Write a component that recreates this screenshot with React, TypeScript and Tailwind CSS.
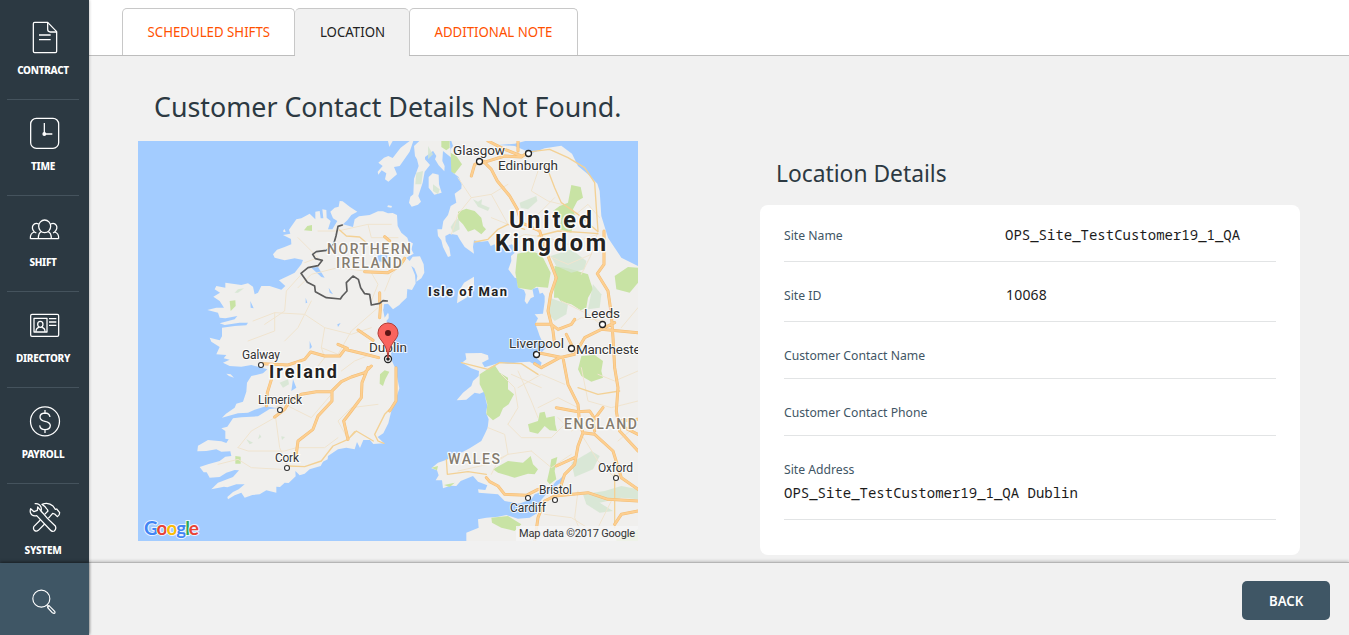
import React from "react";

const ICONS: Record<string, React.ReactNode> = {
  CONTRACT: (
    <>
      <path d="M23 7H62L89 35V94Q89 98 85 98H23Q19 98 19 94V11Q19 7 23 7Z" />
      <path d="M62 7V28Q62 36 70 36H89M36 45H71M36 59H71" />
    </>
  ),
  TIME: (
    <>
      <rect x="11" y="7" width="84" height="90" rx="17" />
      <path d="M52 21V54H76" />
      <circle cx="52" cy="54" r="4" fill="white" />
    </>
  ),
  SHIFT: (
    <>
      <ellipse cx="53" cy="43" rx="18" ry="19" />
      <path d="M34 80Q34 62 43 59M63 59Q73 62 73 80M10 80H95M10 80Q9 64 22 60Q13 50 18 40Q24 31 35 36M95 80Q96 64 83 60Q93 50 88 40Q82 31 71 36M22 60L28 63M83 60L78 63" />
    </>
  ),
  DIRECTORY: (
    <>
      <rect x="11" y="19" width="84" height="66" rx="4" />
      <rect x="21" y="31" width="39" height="41" />
      <ellipse cx="40" cy="49" rx="8" ry="9" />
      <path d="M27 71Q27 60 36 58M44 58Q54 60 54 71" />
      <path d="M66 32H88M66 42H88M66 52H88" />
    </>
  ),
  PAYROLL: (
    <>
      <circle cx="54" cy="52" r="43.5" />
      <path d="M54 18V27M54 77V87M69 39Q67 27 54 27Q39 28 39 39Q39 49 54 52Q70 55 70 65Q69 77 54 77Q40 77 38 64" />
    </>
  ),
  SYSTEM: (
    <>
      <path d="M23 11Q37 9 42 21Q44 28 42 34L52 44M62 56L85 78Q89 87 82 93Q75 96 70 90L29 47Q14 50 10 37Q9 30 11 26L21 35L31 31L32 21Z" />
      <path d="M40 60L21 79Q17 87 23 92Q29 95 34 91L53 72M53 43L63 33Q58 20 45 13Q64 5 78 18L85 28L89 27L98 38Q98 46 91 50L83 42L77 40L64 55" />
    </>
  ),
};

const NAV = ["CONTRACT", "TIME", "SHIFT", "DIRECTORY", "PAYROLL", "SYSTEM"];

function Sidebar() {
  return (
    <aside className="relative z-10 flex h-full w-[89px] shrink-0 flex-col bg-[#2c3942] shadow-[0_0_3px_rgba(0,0,0,0.3)]">
      <nav className="flex h-[563px] flex-col overflow-hidden pt-1">
        {NAV.map((name) => (
          <div
            key={name}
            className="mr-[10px] ml-[7px] flex h-24 shrink-0 flex-col items-center border-b border-[#45535d] pt-4"
          >
            <svg
              viewBox="0 0 108 108"
              className="ml-1 size-9 shrink-0"
              fill="none"
              stroke="white"
              strokeWidth="3.8"
              strokeLinejoin="round"
            >
              {ICONS[name]}
            </svg>
            <span className="mt-[7px] text-[10px] leading-[14px] font-extrabold tracking-[-0.3px] text-white">
              {name}
            </span>
          </div>
        ))}
      </nav>
      <div className="flex h-[72px] items-center justify-center bg-[#3f5665] pt-[6px] pr-[2px] shadow-[0_-1px_3px_rgba(0,0,0,0.5)]">
        <svg viewBox="0 0 72 78" className="h-[26px] w-6" fill="none" stroke="white" strokeWidth="3.4">
          <circle cx="28" cy="29" r="25.5" />
          <path d="M44 49L50 55M51 50L68 67Q71 73 66 73L61 71L47 56Q46 50 51 50Z" />
        </svg>
      </div>
    </aside>
  );
}

type LabelProps = { x: number; y: number; size: number; width: number; children: string };

function City({ x, y, size, width, children }: LabelProps) {
  return (
    <text
      x={x}
      y={y}
      fontSize={size}
      textLength={width}
      fill="#333"
      stroke="#fff"
      strokeWidth="2"
      strokeOpacity="0.8"
      paintOrder="stroke"
      className="font-['Roboto',sans-serif]"
    >
      {children}
    </text>
  );
}

function Region({ x, y, size, width, children, dark }: LabelProps & { dark?: boolean }) {
  return (
    <text
      x={x}
      y={y}
      fontSize={size}
      textLength={width}
      fill={dark ? "#222" : "#857d70"}
      stroke="#fff"
      strokeWidth={dark ? 3 : 2.5}
      strokeOpacity="0.85"
      strokeLinejoin="round"
      paintOrder="stroke"
      fontWeight={dark ? 700 : 500}
      className="font-['Roboto',sans-serif]"
    >
      {children}
    </text>
  );
}

const IRELAND =
  "M605 180L614 181 635 197 658 212 640 222 628 238 615 250 645 258 650 235 663 226 695 222 720 211 735 211 750 217 764 216 777 222 779 255 790 275 808 290 813 305 825 307 820 325 827 338 805 350 815 360 824 347 846 346 857 370 859 395 850 412 835 422 838 405 829 382 820 375 831 402 833 427 822 447 808 444 806 470 790 485 784 492 765 505 750 488 738 490 736 507 752 518 752 532 745 540 756 557 764 587 766 617 759 637 763 662 774 687 778 712 784 742 775 770 766 787 757 822 751 847 736 877 719 888 738 907 706 909 696 897 676 897 666 921 657 903 650 925 625 920 600 925 570 945 569 955 555 962 548 975 515 985 500 998 485 1003 472 990 473 1006 452 1026 440 1025 426 1038 415 1037 415 1055 385 1048 365 1060 343 1062 320 1070 310 1055 290 1063 270 1075 268 1068 285 1053 302 1045 320 1030 295 1030 268 1039 258 1037 220 1045 240 1025 285 1008 303 988 290 987 265 995 245 1008 215 1010 206 994 197 994 185 978 210 970 245 960 262 947 280 945 277 931 250 932 235 925 205 930 178 931 180 914 210 897 250 901 265 906 272 895 262 893 262 870 250 862 268 857 285 832 310 829 360 826 395 804 420 802 383 796 350 806 330 815 300 817 252 830 264 818 290 800 295 788 315 782 325 752 327 725 340 705 375 697 388 685 372 680 340 672 310 677 275 675 255 665 275 656 257 652 265 642 235 640 245 618 220 602 215 590 245 598 252 586 252 560 290 555 325 553 330 545 305 545 260 552 245 547 290 535 298 525 262 532 245 530 240 515 208 507 235 500 258 500 245 480 226 467 246 455 230 445 235 435 262 440 262 425 310 432 330 427 345 437 350 460 360 455 370 435 395 435 430 446 442 435 423 418 450 405 470 395 490 370 495 357 470 352 440 358 410 350 405 340 417 326 440 318 460 310 459 294 435 282 457 278 453 266 475 235 490 232 515 218 532 235 532 212 545 210 548 232 556 232 553 205 565 207 566 230 578 240 570 265 583 265 598 240 585 232 577 212 590 200 602 197Z";

const BRITAIN =
  "M940 0L945 15 938 25 940 60 945 95 962 108 971 128 970 143 950 158 955 185 938 195 930 222 916 240 912 265 898 265 900 285 910 298 915 318 930 348 938 345 934 320 923 300 922 285 935 278 958 282 965 295 980 318 1008 338 1005 318 1008 298 1030 302 1050 300 1058 315 1070 310 1075 324 1122 310 1131 320 1130 335 1119 345 1120 360 1111 385 1130 410 1137 412 1140 440 1158 447 1163 460 1160 480 1167 490 1178 472 1188 467 1183 443 1200 440 1205 458 1214 455 1220 465 1220 482 1215 518 1190 520 1200 532 1192 548 1200 570 1205 585 1212 600 1224 620 1205 640 1190 628 1195 650 1211 665 1205 680 1192 672 1175 662 1145 664 1110 668 1085 665 1040 679 1032 665 1052 655 1050 643 1030 636 982 637 985 655 972 665 1000 682 1023 690 1022 705 1005 720 1000 735 975 755 956 778 985 776 1010 755 1025 758 1042 751 1043 775 1048 795 1044 815 1052 835 1049 860 1040 880 1030 900 995 922 970 935 948 941 930 955 900 965 880 982 897 988 902 1003 893 1018 912 1018 915 1042 937 1034 955 1035 968 1020 1005 1005 1020 1022 1048 1033 1042 1047 1020 1045 1022 1055 1080 1060 1100 1080 1143 1088 1180 1075 1190 1060 1218 1050 1242 1036 1255 1020 1265 1015 1278 1002 1268 1025 1237 1048 1222 1063 1210 1076 1202 1095 1197 1117 1175 1130 1140 1133 1105 1122 1080 1127 1045 1130 1020 1135 1022 1160 985 1175 985 1200H1500V375L1450 350 1430 320 1410 290 1390 225 1385 150 1378 128 1350 100 1320 75 1302 38 1270 14 1220 22 1185 35 1160 28 1130 15 1080 12 1130 8 1162 0Z";

const ISLANDS = [
  "M721 65L738 50 751 45 764 51 788 20 815 0H826L815 32 785 75 768 78 777 100 751 122 741 115 745 97 731 88 721 101 719 92 734 75Z",
  "M750 0H764L754 18Z",
  "M844 0H900L885 30 861 48 861 55 876 72 860 92 854 125 841 165 849 182 840 191 821 197 813 185 817 167 826 160 828 113 842 75 837 55 831 45 828 15Z",
  "M884 97L902 101 903 130 911 155 889 161 872 140 872 108Z",
  "M885 0H935L940 50 915 30 913 60 920 75 919 91 902 73 891 55 895 45 880 22Z",
  "M1008 407V445L985 470 957 487 960 455 978 425Z",
  "M750 193L762 195 760 200 748 198Z",
  "M436 268L440 264 443 273 436 273ZM265 698L278 700 288 710 273 705Z",
];

const PARKS_BRIGHT = [
  "M960 212L985 203 1010 210 1030 230 1035 255 1044 265 1030 280 1010 265 990 272 975 250 960 235Z",
  "M1138 338L1175 330 1210 340 1225 370 1238 395 1230 440 1195 437 1180 447 1140 440 1132 395 1135 365Z",
  "M1250 375L1290 382 1350 400 1358 425 1365 445 1350 470 1345 500 1328 508 1300 490 1270 482 1260 470 1248 470Z",
  "M1300 132L1328 138 1335 170 1318 180 1305 205 1310 220 1300 275 1265 265 1270 235 1245 210 1265 195 1290 185Z",
  "M1430 405L1470 378 1500 380V425L1475 455 1435 445Z",
  "M1025 700L1055 680 1070 672 1085 695 1110 710 1110 745 1128 760 1112 790 1095 802 1085 825 1065 838 1045 820 1048 790 1040 760 1025 730Z",
  "M1330 645L1370 642 1395 660 1390 690 1395 710 1360 722 1330 705 1320 685 1325 665Z",
  "M1170 850L1200 840 1205 815 1220 812 1225 830 1250 825 1252 850 1257 870 1235 868 1220 855 1200 878 1175 872Z",
  "M1065 985L1110 960 1155 965 1178 945 1185 970 1200 985 1190 1000 1170 998 1130 1010 1080 995Z",
  "M1060 1130L1110 1125 1150 1150 1130 1170 1090 1160 1062 1145Z",
  "M1240 955L1258 948 1250 990 1255 1015 1235 1030 1227 1020 1235 985Z",
  "M938 35L955 45 972 70 950 98 940 92Z",
  "M910 0H935V20L925 28 910 18Z",
  "M498 268L508 255 522 252 522 270Z",
  "M275 480L292 478 293 495 278 510Z",
  "M726 700L740 688 754 692 742 715 735 735 725 728Z",
  "M292 945L308 947 308 968 292 968Z",
  "M880 980L900 975 897 988ZM918 1032L950 1025 935 1038ZM1435 1195L1500 1165V1200H1435Z",
];

const PARKS_PALE = [
  "M1145 185L1195 165 1198 180 1170 205 1148 200Z",
  "M950 240L962 232 965 265 945 275 938 258Z",
  "M1005 175L1020 182 1032 175 1030 190 1055 200 1050 210 1020 197Z",
  "M1238 345L1300 325 1345 360 1340 385 1300 395 1255 375Z",
  "M1235 470L1290 490 1285 520 1250 540 1228 515Z",
  "M1365 430L1390 460 1385 500 1350 505Z",
  "M1300 965L1360 930 1385 945 1365 985 1310 1008Z",
  "M1335 1060L1400 1050 1450 1035 1500 1045V1075L1450 1070 1385 1085 1425 1110 1385 1115 1345 1090Z",
  "M425 725L450 715 453 730 435 740Z",
  "M290 455L300 445 318 442 300 455Z",
  "M325 895L345 905 335 910ZM430 886L441 888 432 897ZM365 880L370 888 360 895Z",
  "M835 95L855 90 850 130 832 130ZM870 15L885 40 870 55ZM885 130L905 145 900 160 885 150Z",
];

const MINOR_ROADS =
  "M480 440L520 400 600 380 680 390M380 550L440 510 445 450 490 400M345 540L410 515 500 520 560 560 640 580 700 560M330 600L410 570 410 515M440 600L480 560 500 520 520 480M560 560L550 620 600 640M600 640L640 570 720 500M520 700L560 650 550 620M410 800L440 790 520 830 580 760M413 830L425 920 450 980M300 920L340 870 410 830M300 920L330 930 440 930 475 920M240 970L300 955 340 980 430 985M475 920L560 920 600 890M630 895L600 840 640 800 720 790M610 690L650 660 700 640M540 270L600 270 690 250 760 250M480 290L540 350 500 365M690 250L700 290 780 290M740 450L760 400 800 360M700 480L720 430 700 395M960 110L1000 170 960 220 940 280M1000 170L1060 160 1110 130M1060 230L1110 250 1060 160M1200 90L1180 150 1230 180 1270 190M1180 260L1200 220 1250 170M1120 300L1160 280 1230 290M1380 270L1360 340 1330 400M1220 340L1290 370 1360 340M1270 480L1350 520 1400 560M1260 570L1330 530 1400 540M1090 700L1130 740 1140 800 1110 850M1140 740L1210 700 1280 730M1110 850L1150 890 1240 890 1300 830M1050 860L1100 880 1110 940 1180 930M1110 940L1080 960 1060 1000M1180 930L1240 980 1300 940M1200 800L1260 770 1320 800M1330 680L1350 780 1420 800 1500 780M1380 700L1430 720 1500 690M1330 880L1380 960 1430 1010M1220 1120L1300 1130 1380 1180M1320 1050L1310 1130 1340 1200M1420 1080L1380 1160M1140 690L1180 780 1200 830M960 990L1050 970 1110 940M1120 700L1210 740M1290 240L1350 190 1385 230M1230 290L1290 310 1380 280M1450 560L1500 500M1290 860L1260 830M1440 900L1500 850M1380 820L1300 870M1460 640L1500 620";

const SECONDARY_ROADS =
  "M605 267L625 285 665 288 685 305M1010 303L1050 295 1080 265 1110 250 1160 265M1180 32L1235 25 1290 50 1340 80 1370 125 1375 200 1380 270M1225 75L1250 140 1270 185 1320 220 1380 272M1200 285L1260 270 1340 275 1380 278M738 907L720 900 710 880 740 820 755 805M706 900L655 870 630 895 585 915 550 960 500 977 450 975M970 665L1050 685 1085 665 1150 668 1200 700M925 955L928 1000 990 992 1045 1000M1320 740L1380 760 1445 750M1430 1000L1430 1160M630 895L650 872";

const MOTORWAYS =
  "M375 668L450 672 500 655 518 633 560 645 605 645 620 625 670 637 722 650M600 610L628 622M385 795L388 755 402 710M410 828L440 805 455 780 490 760 535 752 580 752 610 722 640 708 680 695 700 675M582 752V780L540 825 525 865 480 900 474 945M690 680L672 725 670 770 640 810 617 840 630 895M774 680V780L755 810M728 490L725 530M660 567L705 598M740 287L755 300M680 392L750 395 785 375 800 352M725 455V482M1000 105L1010 70 1035 60 1060 85 1078 120 1115 165 1138 205 1150 245 1205 270 1230 345 1255 410 1238 460 1230 510 1245 570 1250 610M1035 65L1100 45 1150 48 1168 35M1050 0L1100 25 1150 45M1140 0V30M1398 270V370L1378 398 1410 450 1420 520 1425 590 1430 680 1440 740 1435 810 1445 870 1500 930M1195 550L1240 550 1260 565 1300 550 1310 535M1285 580L1300 610M1190 668L1210 680 1265 650 1310 640 1340 590 1390 565 1500 575M1200 635L1275 650 1290 730 1320 790 1325 850 1335 875M1255 800L1320 812 1355 810 1365 825M1395 800L1365 840 1370 870M1500 835L1440 840M1045 1010L1055 1022 1080 1035 1100 1060 1165 1063 1200 1045M1500 880L1460 860M1335 875L1320 915 1310 970 1280 1000 1260 1060 1220 1080 1200 1130 1190 1200M1255 975L1310 950M1335 875L1370 880 1425 930 1450 1010 1500 1045M1250 1065L1350 1055 1410 1075 1500 1080M1430 1150L1450 1120 1500 1110M1430 545L1390 565";

function MapPicture() {
  return (
    <svg viewBox="0 0 500 400" className="block h-[400px] w-[500px] bg-[#a3ccff]">
      <g transform="scale(0.33333)" strokeLinejoin="round" strokeLinecap="round">
        <g fill="#f0efed">
          <path d={IRELAND} />
          <path d={BRITAIN} />
          {ISLANDS.map((d) => (
            <path key={d} d={d} />
          ))}
        </g>
        <g fill="#c8e3a4">
          {PARKS_BRIGHT.map((d) => (
            <path key={d} d={d} />
          ))}
        </g>
        <g fill="#d3e5cf" fillOpacity="0.8">
          {PARKS_PALE.map((d) => (
            <path key={d} d={d} />
          ))}
        </g>
        <path
          d="M520 380L540 378 560 410 550 408ZM572 440L585 460 575 455ZM720 342H748V365L715 360ZM337 480L347 502 338 500ZM503 470L508 485 503 487ZM515 600L522 618 515 625ZM465 715L475 740 460 750ZM598 550L608 546 600 558ZM735 505L750 515 740 530Z"
          fill="#a3ccff"
        />
        <g fill="none">
          <path d={MINOR_ROADS} stroke="#f0e4cf" strokeWidth="3" />
          <path d={SECONDARY_ROADS} stroke="#f3d195" strokeWidth="4" />
          <path d={MOTORWAYS} stroke="#f2bd75" strokeWidth="9" />
          <path d={MOTORWAYS} stroke="#fdcf91" strokeWidth="6" />
          <path
            d="M613 252L600 256 594 285 587 310 565 328 535 332 524 340 532 353 553 358 540 374 510 380 489 397 508 424 530 435 532 452 565 470 607 474 613 465 627 450 625 425 645 405 661 415 668 440 680 458 695 460 700 492 725 487 735 479 748 480"
            stroke="#5c5c5c"
            strokeWidth="5"
          />
        </g>
      </g>

      <g fill="#fff" stroke="#222" strokeWidth="1.3">
        <circle cx="341.5" cy="20.5" r="3" />
        <circle cx="390.5" cy="12.5" r="3" />
        <circle cx="464.5" cy="183.5" r="3" />
        <circle cx="398.5" cy="213.5" r="3" />
        <circle cx="433.5" cy="207.5" r="3" />
        <circle cx="250" cy="218" r="3.5" />
      </g>
      <g fill="#fff" stroke="#333" strokeWidth="1.1">
        <circle cx="123" cy="224" r="2.5" />
        <circle cx="142" cy="269" r="2.5" />
        <circle cx="149" cy="327" r="2.5" />
        <circle cx="478" cy="337" r="2.5" />
        <circle cx="390" cy="357" r="2.5" />
        <circle cx="417" cy="359" r="2.5" />
      </g>
      <circle cx="250" cy="218" r="1.8" fill="#222" />

      <City x={315} y={14} size={13.5} width={52}>Glasgow</City>
      <City x={360} y={28.5} size={13.5} width={60}>Edinburgh</City>
      <City x={446} y={177} size={13.5} width={36}>Leeds</City>
      <City x={371} y={207} size={13.5} width={55}>Liverpool</City>
      <City x={438} y={213} size={13.5} width={69}>Manchester</City>
      <City x={104} y={218} size={12} width={38}>Galway</City>
      <City x={120} y={263} size={12} width={44}>Limerick</City>
      <City x={137} y={321} size={12} width={24}>Cork</City>
      <City x={231} y={211} size={13.5} width={38}>Dublin</City>
      <City x={460} y={331} size={12} width={35}>Oxford</City>
      <City x={401} y={353} size={12} width={33}>Bristol</City>
      <City x={372} y={371} size={12} width={36}>Cardiff</City>

      <Region x={189} y={113} size={14} width={84}>NORTHERN</Region>
      <Region x={198} y={127} size={14} width={66}>IRELAND</Region>
      <Region x={426} y={288} size={14} width={73}>ENGLAND</Region>
      <Region x={310} y={323} size={14} width={52}>WALES</Region>
      <Region x={371} y={86.5} size={23.5} width={83} dark>United</Region>
      <Region x={357} y={109.5} size={23.5} width={111} dark>Kingdom</Region>
      <Region x={131} y={237} size={18} width={68} dark>Ireland</Region>
      <Region x={290} y={154.5} size={13} width={79} dark>Isle of Man</Region>

      <path
        d="M250 217C249.5 209 247 204 243 199C240.5 196 240 193.5 240 192A10 10 0 0 1 260 192C260 193.5 259.5 196 257 199C253 204 250.5 209 250 217Z"
        fill="#f9645e"
        stroke="#b13c35"
        strokeWidth="1"
      />
      <circle cx="250" cy="192" r="3" fill="#5c1515" />

      <text
        x="6"
        y="394"
        fontSize="19"
        textLength="55"
        strokeWidth="2"
        stroke="#fff"
        strokeOpacity="0.8"
        paintOrder="stroke"
        fontWeight="700"
        className="font-['Lato',sans-serif]"
      >
        <tspan fill="#4285f4">G</tspan>
        <tspan fill="#ea4335">o</tspan>
        <tspan fill="#fbbc05">o</tspan>
        <tspan fill="#4285f4">g</tspan>
        <tspan fill="#34a853">l</tspan>
        <tspan fill="#ea4335">e</tspan>
      </text>
      <rect x="378" y="385" width="122" height="15" fill="#f5f5f5" fillOpacity="0.85" />
      <text x="381" y="396" fontSize="11" textLength="116" fill="#333" className="font-['Roboto',sans-serif]">
        Map data ©2017 Google
      </text>
    </svg>
  );
}

function Label({ children }: { children: string }) {
  return (
    <div className="w-[221px] shrink-0 text-[13px] leading-6 text-[#3f5665]">
      <span className="inline-block origin-left scale-x-[0.938] whitespace-nowrap">{children}</span>
    </div>
  );
}

function Mono({ children }: { children: string }) {
  return (
    <div className="-mt-0.5 font-['Noto_Sans_Mono','DejaVu_Sans_Mono',monospace] text-[15px] leading-6 text-[#1b1b1b]">
      <span className="inline-block origin-left scale-x-[0.933] whitespace-nowrap">{children}</span>
    </div>
  );
}

function LocationDetails() {
  return (
    <section className="mt-[101px] w-[540px]">
      <h2 className="pl-4 text-[24px] leading-[32px] text-[#2c3942]">
        <span className="inline-block origin-left scale-x-[0.95]">Location Details</span>
      </h2>
      <div className="mt-4 h-[350px] rounded-lg bg-white px-6">
        <div className="flex h-[57px] items-center border-b border-[#e2e4e5] pt-1">
          <Label>Site Name</Label>
          <Mono>OPS_Site_TestCustomer19_1_QA</Mono>
        </div>
        <div className="flex h-[60px] items-center border-b border-[#e2e4e5] pt-[7px]">
          <Label>Site ID</Label>
          <span className="pl-px text-[14px] leading-6 tracking-[0.2px] text-[#1b1b1b]">10068</span>
        </div>
        <div className="flex h-[57px] items-center border-b border-[#e2e4e5] pt-[10px]">
          <Label>Customer Contact Name</Label>
        </div>
        <div className="flex h-[57px] items-center border-b border-[#e2e4e5] pt-[10px]">
          <Label>Customer Contact Phone</Label>
        </div>
        <div className="flex h-[84px] flex-col border-b border-[#e2e4e5] pt-[21px]">
          <Label>Site Address</Label>
          <div className="pt-px">
            <Mono>OPS_Site_TestCustomer19_1_QA Dublin</Mono>
          </div>
        </div>
      </div>
    </section>
  );
}

export default function App() {
  return (
    <div className="flex h-[635px] w-[1349px] overflow-hidden bg-[#f1f1f1] font-['Noto_Sans',sans-serif]">
      <Sidebar />
      <main className="flex min-w-0 flex-1 flex-col">
        <div className="flex h-14 shrink-0 items-end border-b border-[#bdbdbd] bg-white pl-[33px] text-[14px] whitespace-nowrap text-[#ff5100]">
          <div className="flex h-[47px] w-[173px] items-center justify-center rounded-t-[5px] border border-b-0 border-[#c8c8c8] pb-0.5">
            <span className="scale-x-[0.945]">SCHEDULED SHIFTS</span>
          </div>
          <div className="-mb-px flex h-12 w-[114px] items-center justify-center rounded-t-[5px] border-t border-[#c8c8c8] bg-[#f1f1f1] pb-[3px] text-[#222]">
            <span className="scale-x-[0.945]">LOCATION</span>
          </div>
          <div className="flex h-[47px] w-[169px] items-center justify-center rounded-t-[5px] border border-b-0 border-[#c8c8c8] pb-0.5">
            <span className="scale-x-[0.945]">ADDITIONAL NOTE</span>
          </div>
        </div>
        <div className="flex h-[506px] shrink-0 pl-[49px]">
          <div className="w-[622px] shrink-0 pt-[30px]">
            <h1 className="pl-4 text-[28px] leading-[40px] text-[#2c3942]">
              <span className="inline-block origin-left scale-x-[0.957] whitespace-nowrap">
                Customer Contact Details Not Found.
              </span>
            </h1>
            <div className="mt-[15px]">
              <MapPicture />
            </div>
          </div>
          <LocationDetails />
        </div>
        <footer className="flex h-[73px] items-center justify-end border-t border-[#b5b5b5] pt-[3px] pr-[19px] shadow-[0_-1px_3px_rgba(0,0,0,0.2)]">
          <button className="h-[39px] w-[88px] rounded-[5px] bg-[#3f5665] text-[14px] font-semibold text-white">
            <span className="inline-block scale-x-[0.94]">BACK</span>
          </button>
        </footer>
      </main>
    </div>
  );
}
